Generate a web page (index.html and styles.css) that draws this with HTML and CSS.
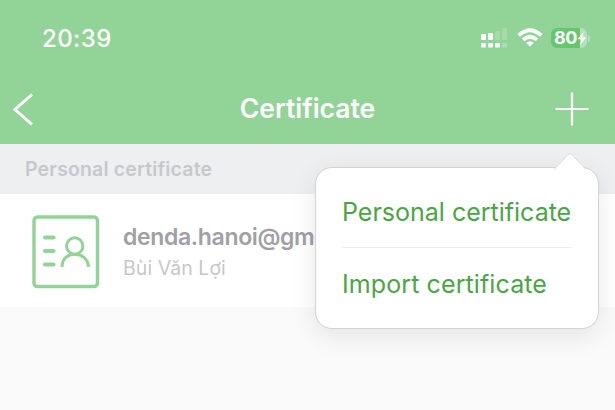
FILE: index.html
```html
<!DOCTYPE html>
<html lang="en">
<head>
<meta charset="utf-8">
<title>Certificate</title>
<link rel="stylesheet" href="styles.css">
</head>
<body>
<header class="header">
  <div class="status">
    <span class="time">20:39</span>
    <div class="indicators">
      <svg class="signal" width="27" height="20" viewBox="0 0 27 20" fill="#fff">
        <rect x="0" y="6" width="5" height="6" rx="1"/><rect x="7" y="5" width="5" height="7" rx="1"/>
        <rect x="14" y="3" width="5" height="9" rx="1" opacity=".18"/><rect x="21" y="0" width="5" height="12" rx="1" opacity=".18"/>
        <rect x="0" y="15" width="5" height="4.5" rx="1"/><rect x="7" y="15" width="5" height="4.5" rx="1"/>
        <rect x="14" y="15" width="5" height="4.5" rx="1"/><rect x="21" y="15" width="5" height="4.5" rx="1" opacity=".25"/>
      </svg>
      <svg class="wifi" width="26" height="20" viewBox="0 0 26 20" fill="none" stroke="#fff" stroke-width="3.8">
        <path d="M1.7 7.3Q13-2.9 24.3 7.3M6 11.8Q13 5.6 20 11.8"/>
        <path d="M9.2 14.8Q13 11.8 16.8 14.8L13 18.7Z" fill="#fff" stroke="none"/>
      </svg>
      <div class="battery">
        <span class="level">80</span>
        <svg class="bolt" width="10" height="15" viewBox="0 0 10 15"><path d="M6.7.5.5 8.2h3.8L3 14.2l6.4-8H5.6Z" fill="#fff"/></svg>
      </div>
      <span class="battery-cap"></span>
    </div>
  </div>
  <div class="nav">
    <svg class="back" width="24" height="36" viewBox="0 0 24 36" fill="none" stroke="#fff" stroke-width="3"><path d="M20 3.5 3 18.5l17 15"/></svg>
    <h1 class="title">Certificate</h1>
    <svg class="add" width="34" height="34" viewBox="0 0 34 34" stroke="#fff" stroke-width="2.2"><path d="M17 .5v33M.5 17h33"/></svg>
  </div>
</header>
<h2 class="section">Personal certificate</h2>
<article class="row">
  <svg class="card" width="68" height="74" viewBox="0 0 68 74" fill="none" stroke="#92d397" stroke-width="3.4" stroke-linecap="round">
    <rect x="2" y="2" width="63.500" height="69.500" rx="3.500"/>
    <path d="M13 22.500h8.500M13 36h8.500M13 49.500h8.500" stroke-width="4.200"/>
    <circle cx="42.700" cy="31" r="8.200" stroke-width="3"/>
    <path d="M30 52C30 43.500 36 39.200 42.700 39.200S56 43.500 56.500 52" stroke-width="3" stroke-linecap="butt"/>
  </svg>
  <div class="info">
    <div class="email">denda.hanoi@gm</div>
    <div class="name">Bùi Văn Lợi</div>
  </div>
</article>
<div class="popover">
  <svg class="arrow" width="32" height="17" viewBox="0 0 32 17"><path d="M0 16.500C2 16 3 14.500 4 13.500L14 2.500Q16 .5 18 2.500L28 13.500C29 14.500 30 16 32 16.500" fill="#fff" stroke="#dcddde" stroke-width="1"/><path d="M2 16h28v1H2z" fill="#fff"/></svg>
  <div class="item first">Personal certificate</div>
  <div class="item second">Import certificate</div>
</div>
</body>
</html>
```
FILE: styles.css
```css
* { box-sizing: border-box; }
body { margin: 0; width: 615px; height: 410px; overflow: hidden; position: relative; background: #fafafa; font-family: Inter, "Liberation Sans", sans-serif; }
svg { display: block; flex: none; }
.header { height: 144px; background: #92d397; color: #fff; }
.status { height: 76px; padding: 0 25px 0 42px; display: flex; align-items: center; justify-content: space-between; }
.time { font-size: 24px; font-weight: 500; letter-spacing: 0.4px; }
.indicators { display: flex; align-items: center; }
.signal { margin-right: 9px; }
.wifi { margin-right: 8px; }
.battery { width: 36px; height: 20px; border-radius: 6px; display: flex; align-items: center; padding-left: 3px; background: linear-gradient(90deg, #65c86d 29px, #b5e0b8 29px); }
.level { font-size: 18px; font-weight: 700; line-height: 20px; letter-spacing: -0.5px; }
.battery-cap { width: 2px; height: 7px; margin-left: 1px; border-radius: 0 2px 2px 0; background: #b5e0b8; }
.nav { height: 66px; padding: 0 26px 0 11px; display: flex; align-items: center; justify-content: space-between; }
.back { margin-left: 1px; }
.title { margin: -2px 0 0 24px; font-size: 26.5px; font-weight: 600; letter-spacing: 0; }
.section { margin: 0; height: 50px; padding-left: 25px; line-height: 51px; background: #edeff1; color: #c7c8cd; font-size: 19.5px; font-weight: 600; letter-spacing: 0.15px; }
.row { height: 113px; padding-left: 32px; display: flex; gap: 23px; background: #fff; }
.card { margin-top: 21px; }
.info { padding-top: 28px; }
.email { font-size: 23px; line-height: 30px; font-weight: 600; letter-spacing: -0.35px; color: #a0a1a4; white-space: nowrap; }
.name { font-size: 19.5px; line-height: 32px; letter-spacing: 0.05px; color: #c7c7c9; }
.popover { position: absolute; left: 315px; top: 167px; width: 284px; height: 162px; padding: 8px 26px; background: #fff; border: 1px solid #d2d3d5; border-radius: 17px; box-shadow: 0 7px 26px rgba(0,0,0,.09); }
.arrow { position: absolute; left: 238px; top: -16px; }
.item { height: 72px; line-height: 73px; font-size: 25px; color: #4ba544; white-space: nowrap; }
.first { border-bottom: 1px solid #ededed; }
.second { letter-spacing: 0.1px; }
```
